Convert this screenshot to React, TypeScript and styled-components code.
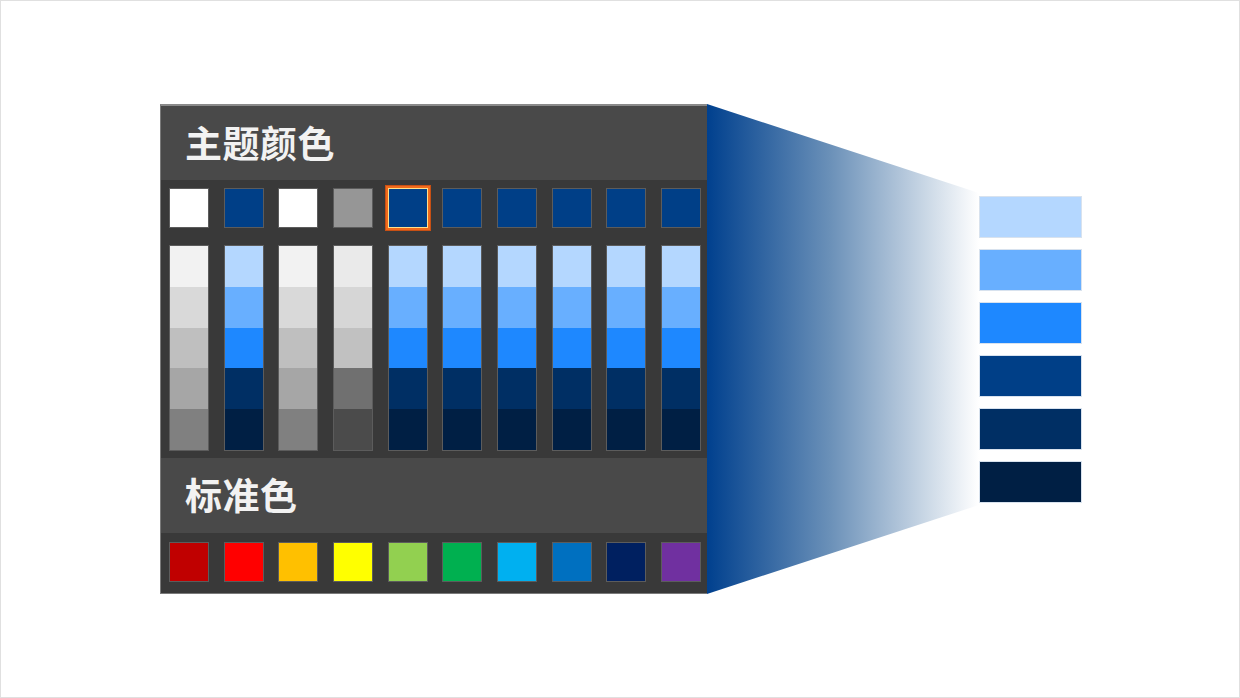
import React from 'react'
import styled, { createGlobalStyle } from 'styled-components'

const GlobalStyle = createGlobalStyle`
  html, body {
    margin: 0;
    padding: 0;
    background: #ffffff;
  }
  * {
    box-sizing: border-box;
  }
`

const themeTop = [
  '#ffffff',
  '#003f87',
  '#ffffff',
  '#969696',
  '#003f87',
  '#003f87',
  '#003f87',
  '#003f87',
  '#003f87',
  '#003f87',
]

const blueShades = ['#b4d7ff', '#68afff', '#1e88ff', '#002f64', '#001f44']

const themeShades = [
  ['#f2f2f2', '#d9d9d9', '#bfbfbf', '#a6a6a6', '#808080'],
  blueShades,
  ['#f2f2f2', '#d9d9d9', '#bfbfbf', '#a6a6a6', '#808080'],
  ['#eaeaea', '#d6d6d6', '#c1c1c1', '#707070', '#4b4b4b'],
  blueShades,
  blueShades,
  blueShades,
  blueShades,
  blueShades,
  blueShades,
]

const standard = [
  '#c00000',
  '#ff0000',
  '#ffc000',
  '#ffff00',
  '#92d050',
  '#00b050',
  '#00b0f0',
  '#0070c0',
  '#002060',
  '#7030a0',
]

const expanded = ['#b4d7ff', '#68afff', '#1e88ff', '#003f87', '#002f64', '#001f44']

export default function App() {
  return (
    <>
      <GlobalStyle />
      <Stage>
        <Panel>
          <SectionTitle>主题颜色</SectionTitle>
          <ThemeArea>
            <SwatchRow>
              {themeTop.map((c, i) => (
                <Swatch key={i} $color={c} $selected={i === 4} />
              ))}
            </SwatchRow>
            <SwatchRow>
              {themeShades.map((col, i) => (
                <ShadeColumn key={i}>
                  {col.map((c, j) => (
                    <Shade key={j} $color={c} />
                  ))}
                </ShadeColumn>
              ))}
            </SwatchRow>
          </ThemeArea>
          <SectionTitle $tall>标准色</SectionTitle>
          <StandardArea>
            <SwatchRow>
              {standard.map((c, i) => (
                <Swatch key={i} $color={c} />
              ))}
            </SwatchRow>
          </StandardArea>
        </Panel>

        <Connector width="272" height="490" viewBox="0 0 272 490">
          <defs>
            <linearGradient id="fade" x1="0" y1="0" x2="1" y2="0">
              <stop offset="0" stopColor="#00408e" />
              <stop offset="0.45" stopColor="#6a90b8" />
              <stop offset="1" stopColor="#ffffff" />
            </linearGradient>
          </defs>
          <polygon points="0,0 272,89 272,401 0,490" fill="url(#fade)" />
        </Connector>

        <ExpandedList>
          {expanded.map((c) => (
            <ExpandedSwatch key={c} $color={c} />
          ))}
        </ExpandedList>
      </Stage>
    </>
  )
}

const Stage = styled.div`
  width: 1240px;
  height: 698px;
  border: 1px solid #e0e0e0;
  display: flex;
  align-items: center;
  padding-left: 159px;
  background: #ffffff;
`

const Panel = styled.div`
  width: 547px;
  display: flex;
  flex-direction: column;
  background: #393939;
  border: 1px solid #7a7a7a;
  border-right: none;
  border-top: 2px solid #8a8a8a;
`

const SectionTitle = styled.div<{ $tall?: boolean }>`
  height: ${({ $tall }) => ($tall ? 75 : 74)}px;
  background: #494949;
  display: flex;
  align-items: center;
  padding-left: 24px;
  padding-bottom: 3px;
  font-family: 'Noto Sans CJK SC', 'Noto Sans', sans-serif;
  font-weight: 700;
  font-size: 37px;
  color: #f2f2f2;
  letter-spacing: 0.5px;
`

const ThemeArea = styled.div`
  display: flex;
  flex-direction: column;
  gap: 17px;
  padding: 8px 6px 7px 8px;
`

const StandardArea = styled.div`
  padding: 9px 6px 11px 8px;
`

const SwatchRow = styled.div`
  display: flex;
  justify-content: space-between;
`

const Swatch = styled.div<{ $color: string; $selected?: boolean }>`
  width: 40px;
  height: 40px;
  background: ${({ $color }) => $color};
  border: 1px solid #5c5c5c;
  ${({ $selected }) =>
    $selected &&
    `
    border: 1px solid #ffe08a;
    box-shadow: 0 0 0 2px #f06a1c, 0 0 0 3px #c85014;
  `}
`

const ShadeColumn = styled.div`
  width: 40px;
  display: flex;
  flex-direction: column;
  border: 1px solid #5c5c5c;
`

const Shade = styled.div<{ $color: string }>`
  height: 40.8px;
  background: ${({ $color }) => $color};
`

const Connector = styled.svg`
  display: block;
  flex-shrink: 0;
`

const ExpandedList = styled.div`
  display: flex;
  flex-direction: column;
  gap: 11px;
`

const ExpandedSwatch = styled.div<{ $color: string }>`
  width: 103px;
  height: 42px;
  background: ${({ $color }) => $color};
  border: 1px solid #d8e2ee;
`
